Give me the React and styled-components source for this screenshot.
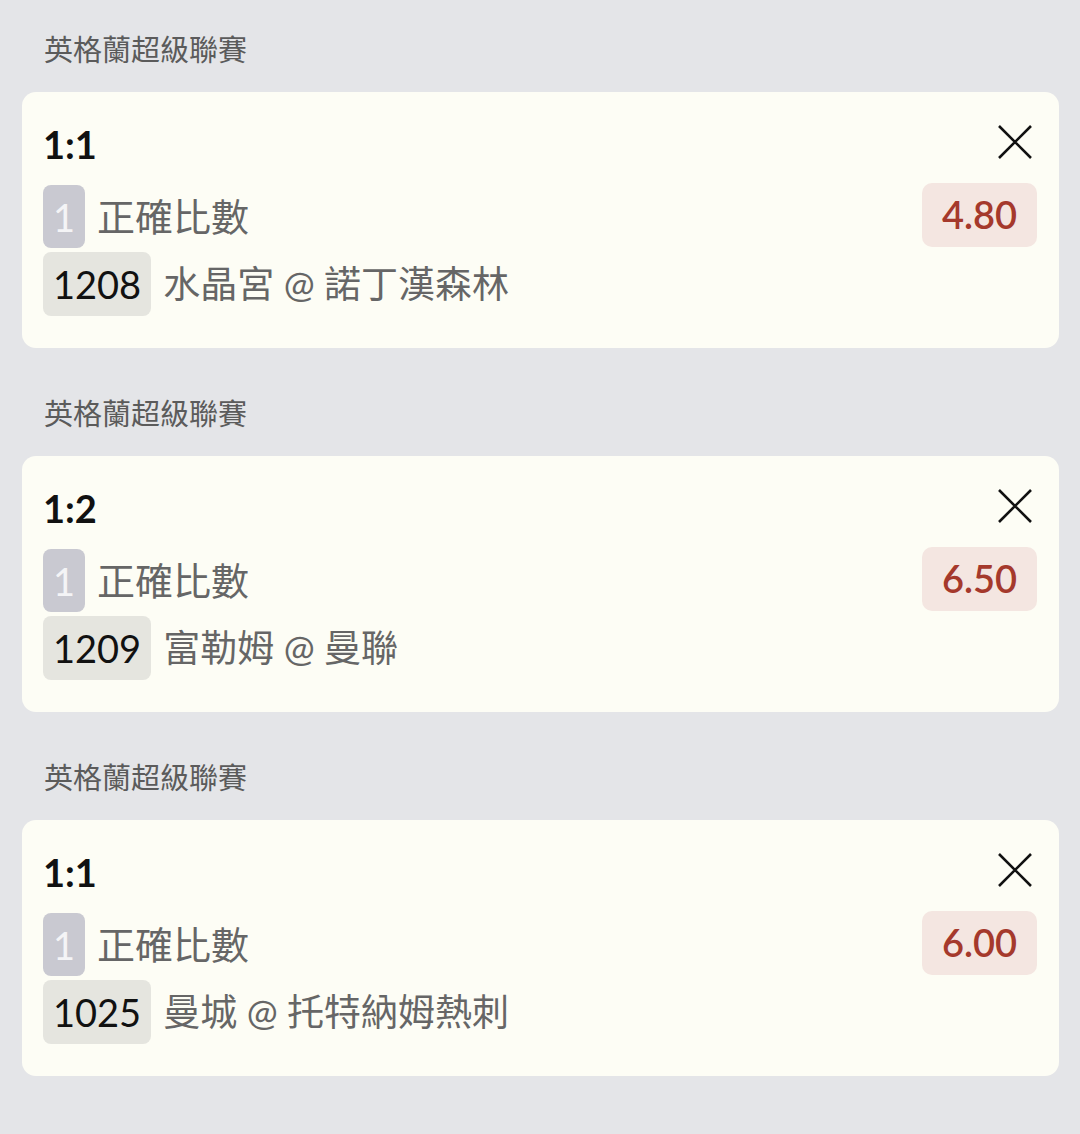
import React from 'react'
import styled, { createGlobalStyle } from 'styled-components'

const GlobalStyle = createGlobalStyle`
  html, body {
    margin: 0;
    padding: 0;
    background: #e4e5e8;
  }
  body {
    font-family: Lato, "Noto Sans CJK TC", sans-serif;
  }
`

const Page = styled.div`
  min-height: 100vh;
  padding: 0 21px 0 22px;
  display: flex;
  flex-direction: column;
  gap: 16px;
  background: #e4e5e8;
`

const Section = styled.section`
  display: flex;
  flex-direction: column;
`

const League = styled.div`
  height: 88px;
  padding: 4px 0 0 22px;
  display: flex;
  align-items: center;
  font-size: 29px;
  color: #5b5b5b;
`

const Card = styled.div`
  background: #fdfdf5;
  border-radius: 14px;
  padding: 26px 22px 32px 21px;
  display: flex;
  flex-direction: column;
`

const TitleRow = styled.div`
  height: 48px;
  display: flex;
  align-items: center;
  justify-content: space-between;
`

const Score = styled.div`
  font-size: 38px;
  font-weight: 700;
  color: #111;
  padding-top: 4px;
`

const Close = styled.button`
  border: none;
  background: none;
  padding: 0;
  margin-right: 5px;
  display: flex;
  cursor: pointer;
`

const Row = styled.div`
  margin-top: ${p => p.$gap}px;
  height: ${p => p.$h}px;
  display: flex;
  align-items: center;
  gap: 12px;
`

const Badge = styled.span`
  height: 100%;
  display: flex;
  align-items: center;
  padding: 0 ${p => p.$pad}px;
  border-radius: 8px;
  font-size: 38px;
  background: ${p => p.$bg};
  color: ${p => p.$fg};
`

const Label = styled.span`
  font-size: ${p => p.$size || 38}px;
  color: #666;
  flex: 1;
  padding-bottom: 4px;
`

const Odds = styled.span`
  align-self: flex-start;
  margin-top: -2px;
  height: 64px;
  display: flex;
  align-items: center;
  padding: 0 20px 3px;
  box-sizing: border-box;
  border-radius: 10px;
  background: #f4e6e1;
  color: #a5392c;
  font-size: 38px;
  font-weight: 600;
`

const bets = [
  { score: '1:1', odds: '4.80', no: '1208', match: '水晶宮 @ 諾丁漢森林' },
  { score: '1:2', odds: '6.50', no: '1209', match: '富勒姆 @ 曼聯' },
  { score: '1:1', odds: '6.00', no: '1025', match: '曼城 @ 托特納姆熱刺' },
]

const XIcon = () => (
  <svg width="34" height="34" viewBox="0 0 34 34">
    <path d="M1 1 L33 33 M33 1 L1 33" stroke="#111" strokeWidth="2.6" fill="none" />
  </svg>
)

const App = () => {
  return (
    <Page>
      <GlobalStyle />
      {bets.map((b, i) => (
        <Section key={i}>
          <League>英格蘭超級聯賽</League>
          <Card>
            <TitleRow>
              <Score>{b.score}</Score>
              <Close>
                <XIcon />
              </Close>
            </TitleRow>
            <Row $gap={19} $h={63}>
              <Badge $pad={10} $bg="#c9c9d1" $fg="#f4f4f6">1</Badge>
              <Label>正確比數</Label>
              <Odds>{b.odds}</Odds>
            </Row>
            <Row $gap={4} $h={64}>
              <Badge $pad={10} $bg="#e5e5df" $fg="#111">{b.no}</Badge>
              <Label $size={37}>{b.match}</Label>
            </Row>
          </Card>
        </Section>
      ))}
    </Page>
  )
}

export default App
